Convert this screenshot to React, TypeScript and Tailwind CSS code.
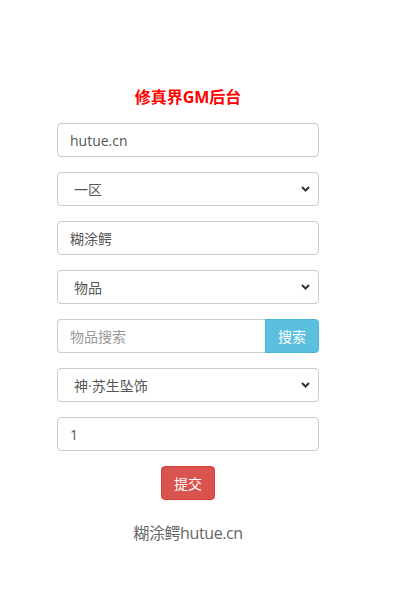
import React from 'react';

function Chevron() {
	return (
		<svg
			className="pointer-events-none absolute right-[9px] top-1/2 -translate-y-1/2"
			width="9"
			height="6"
			viewBox="0 0 9 6"
		>
			<path d="M1 1 L4.5 4.5 L8 1" fill="none" stroke="#333" strokeWidth="2" />
		</svg>
	);
}

function Select({ value }: { value: string }) {
	return (
		<div className="relative">
			<select
				defaultValue={value}
				className="block h-[34px] w-full appearance-none rounded-[4px] border border-[#ccc] bg-white pl-[16px] text-[14px] text-[#555] outline-none"
			>
				<option>{value}</option>
			</select>
			<Chevron />
		</div>
	);
}

const input =
	'block h-[34px] w-full rounded-[4px] border border-[#ccc] bg-white px-[12px] text-[14px] text-[#555] outline-none placeholder:text-[#999]';

export default function App() {
	return (
		<div
			className="min-h-[608px] w-[376px] bg-white px-[57px] pt-[86px]"
			style={{ fontFamily: '"Open Sans", "Noto Sans CJK SC", sans-serif' }}
		>
			<h1 className="text-center text-[16px] font-bold leading-[22px] text-[#f00]">修真界GM后台</h1>
			<div className="mt-[15px] flex flex-col gap-[15px]">
				<input className={input} defaultValue="hutue.cn" />
				<Select value="一区" />
				<input className={input} defaultValue="糊涂鳄" />
				<Select value="物品" />
				<div className="flex">
					<input
						className="block h-[34px] min-w-0 flex-1 rounded-l-[4px] border border-r-0 border-[#ccc] bg-white px-[12px] text-[14px] text-[#555] outline-none placeholder:text-[#999]"
						placeholder="物品搜索"
					/>
					<button className="h-[34px] w-[54px] rounded-r-[4px] border border-[#46b8da] bg-[#5bc0de] text-[14px] text-white">
						搜索
					</button>
				</div>
				<Select value="神·苏生坠饰" />
				<input className={input} defaultValue="1" />
				<div className="flex justify-center">
					<button className="h-[34px] w-[54px] rounded-[4px] border border-[#d43f3a] bg-[#d9534f] text-[14px] text-white">
						提交
					</button>
				</div>
			</div>
			<p className="mt-[22px] text-center text-[16px] leading-[22px] tracking-[-0.4px] text-[#666]">
				糊涂鳄hutue.cn
			</p>
		</div>
	);
}
